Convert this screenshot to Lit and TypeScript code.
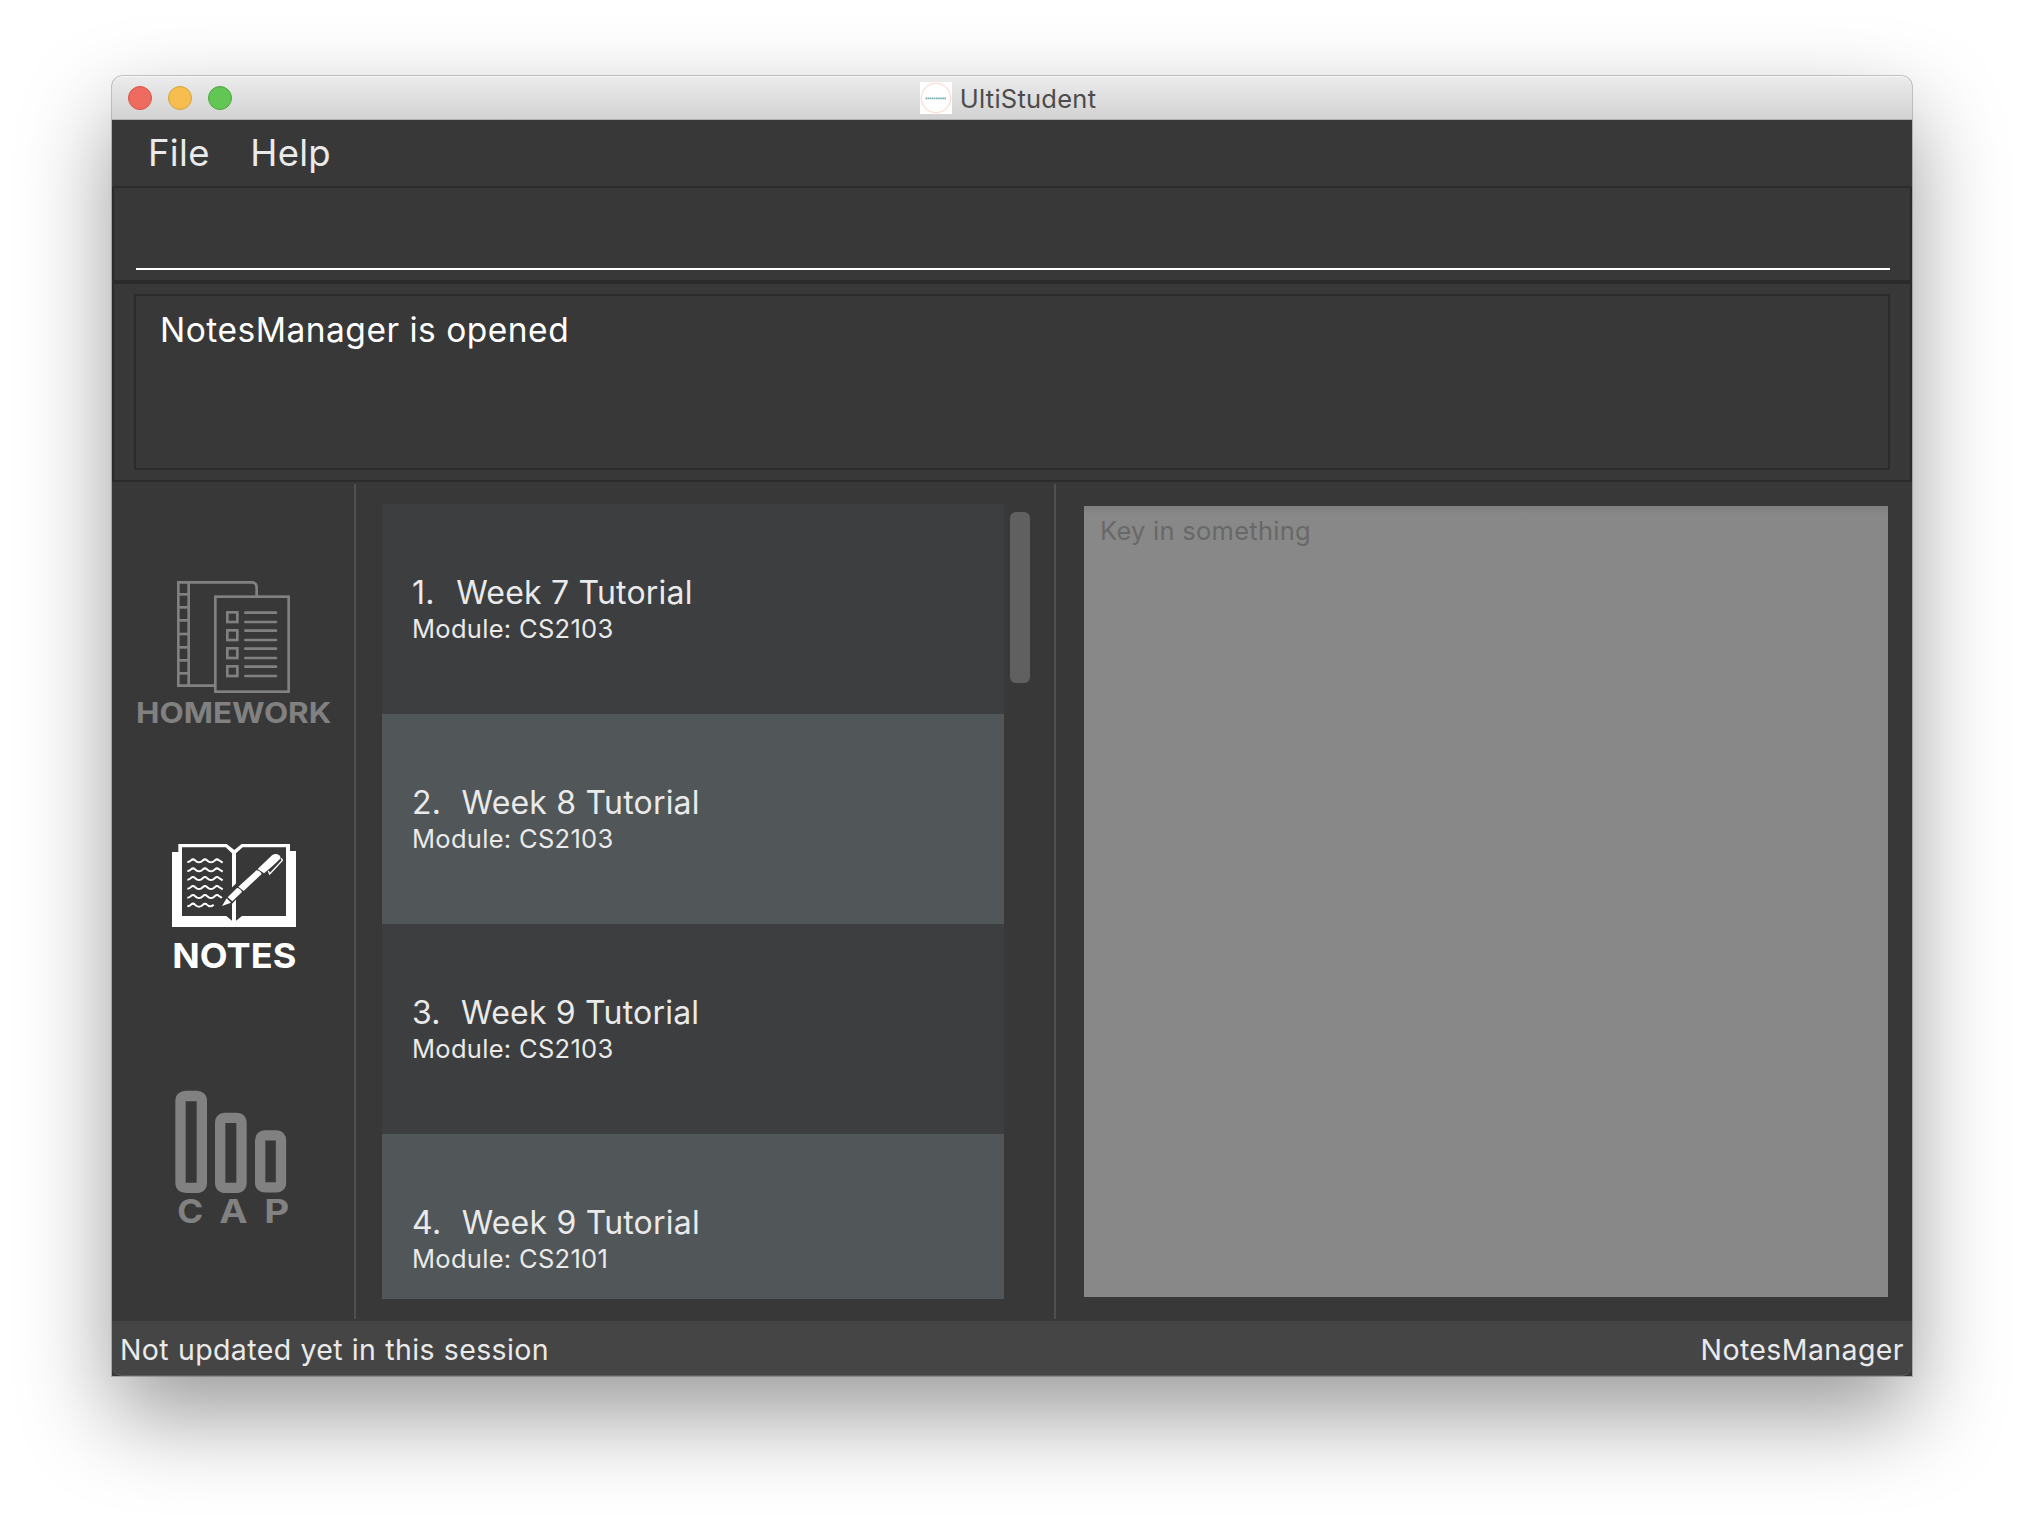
import { LitElement, html, css, svg } from "lit";
import { customElement, property } from "lit/decorators.js";

interface Note {
  title: string;
  module: string;
}

const NOTES: Note[] = [
  { title: "Week 7 Tutorial", module: "CS2103" },
  { title: "Week 8 Tutorial", module: "CS2103" },
  { title: "Week 9 Tutorial", module: "CS2103" },
  { title: "Week 9 Tutorial", module: "CS2101" },
];

const rungs = [103, 142, 181, 222, 262, 301, 340];
const tasks = [153, 207, 261, 315];
const waves = [126, 153, 179, 206, 233];

@customElement("manager-nav")
export class ManagerNav extends LitElement {
  static styles = css`
    :host {
      display: flex;
      flex-direction: column;
      gap: 80px;
      padding: 78px 0 0 8px;
      box-sizing: border-box;
      font-family: Inter, "Liberation Sans", sans-serif;
    }
    svg {
      display: block;
      width: 234px;
    }
    .homework,
    .cap {
      height: 180px;
      color: #818181;
    }
    .notes {
      height: 170px;
      color: #fff;
    }
    text {
      fill: currentColor;
      font-weight: 700;
    }
    .line {
      fill: none;
      stroke: currentColor;
    }
    .solid {
      fill: currentColor;
    }
  `;

  render() {
    return html`
      <svg class="homework" viewBox="0 0 702 540">
        <g class="line" stroke-width="8">
          <path d="M286 377H175V67H398Q410 69 410 84V108" />
          <path d="M206 67V377" />
          ${rungs.map((y) => svg`<path d="M175 ${y}H206" />`)}
          <rect x="286" y="110" width="220" height="285" />
          ${tasks.map(
            (y) => svg`
              <rect x="322" y=${y + 4} width="30" height="29" />
              <path d="M376 ${y + 5}H468M376 ${y + 33}H468" stroke-linecap="round" />`
          )}
        </g>
        <text x="48" y="490" font-size="84" textLength="586" lengthAdjust="spacingAndGlyphs">HOMEWORK</text>
      </svg>

      <svg class="notes" viewBox="0 0 702 510">
        <path
          class="solid"
          fill-rule="evenodd"
          d="M175 72H320L343 90L365 72H510V93H528V321H156V96H175ZM186 82H317L336 100V302L319 288H186ZM498 82H368L348 100V302L366 288H498Z"
        />
        <g class="line" stroke-width="6">
          ${waves.map(
            (y) => svg`<path d="M202 ${y}Q209 ${y} 213 ${y - 5}Q219 ${y - 11} 225 ${y - 5}L230 ${y - 1}Q237 ${y + 3} 244 ${y - 1}L249 ${y - 5}Q255 ${y - 11} 261 ${y - 5}L266 ${y - 1}Q273 ${y + 3} 280 ${y - 1}L285 ${y - 5}Q291 ${y - 11} 297 ${y - 5}L308 ${y + 2}" />`
          )}
          <path d="M202 259Q209 259 213 254Q219 248 225 254L230 258Q237 262 244 258L249 254Q255 248 261 254L266 258Q273 261 281 254" />
        </g>
        <path d="M312 252L350 212L455 112" fill="none" stroke="#383838" stroke-width="34" />
        <path class="solid" d="M306 258L320 235L333 248ZM323 232L351 204Q361 205 366 216L337 244ZM355 200L409 151Q420 152 425 162L371 213ZM413 147L457 105Q468 98 478 106Q484 112 480 120L432 160Z" />
        <path d="M443 160L484 120" stroke="#383838" stroke-width="10" />
        <path class="line" d="M445 153L449 162L487 121L484 115" stroke-width="4" />
        <text x="157" y="443" font-size="102" textLength="372" lengthAdjust="spacingAndGlyphs">NOTES</text>
      </svg>

      <svg class="cap" viewBox="0 0 702 540">
        <g class="line" stroke-width="31">
          <path d="M197.500 78H230Q245.500 78 245.500 93V338Q245.500 353.500 230 353.500H197.500Q181.500 353.500 181.500 338V93Q181.500 78 197.500 78Z" />
          <path d="M316 143.500H349Q364.500 143.500 364.500 159V338Q364.500 353.500 349 353.500H316Q300.500 353.500 300.500 338V159Q300.500 143.500 316 143.500Z" />
          <path d="M436 196H468Q483 196 483 212V338Q483 352 468 352H436Q420.500 352 420.500 338V212Q420.500 196 436 196Z" />
        </g>
        <text x="172" y="460" font-size="99" textLength="78" lengthAdjust="spacingAndGlyphs">C</text>
        <text x="298" y="460" font-size="99" textLength="85" lengthAdjust="spacingAndGlyphs">A</text>
        <text x="433" y="460" font-size="99" textLength="75" lengthAdjust="spacingAndGlyphs">P</text>
      </svg>
    `;
  }
}

@customElement("note-card")
export class NoteCard extends LitElement {
  @property({ type: Number }) index = 1;
  @property() title = "";
  @property() module = "";

  static styles = css`
    :host {
      display: flex;
      flex-direction: column;
      flex: none;
      box-sizing: border-box;
      height: 210px;
      padding: 69px 0 0 30px;
      color: #eaeaea;
      background: #3c3e3f;
    }
    :host(.even) {
      background: #515658;
    }
    .heading {
      display: flex;
      font-size: 32px;
      line-height: 40px;
      gap: 20.200px;
      letter-spacing: 0.2px;
    }
    .number {
      min-width: 24px;
      letter-spacing: 0.3px;
    }
    .module {
      font-size: 25.500px;
      line-height: 32px;
      letter-spacing: 0.3px;
    }
  `;

  render() {
    return html`
      <div class="heading"><span class="number">${this.index}.</span><span>${this.title}</span></div>
      <div class="module">Module: ${this.module}</div>
    `;
  }
}

@customElement("app-root")
export class AppRoot extends LitElement {
  static styles = css`
    :host {
      display: block;
      box-sizing: border-box;
      width: 2024px;
      height: 1524px;
      padding: 76px 112px 148px;
      background: #fff;
      overflow: hidden;
      font-family: Inter, "Liberation Sans", sans-serif;
      color: #eaeaea;
      white-space: nowrap;
    }
    .window {
      display: flex;
      flex-direction: column;
      width: 1800px;
      height: 1300px;
      border-radius: 11px 11px 0 0;
      background: #383838;
      box-shadow: 0 0 0 1px rgba(0, 0, 0, 0.2), 0 39px 92px rgba(0, 0, 0, 0.4);
    }
    .titlebar {
      display: grid;
      grid-template-columns: 1fr auto 1fr;
      align-items: center;
      box-sizing: border-box;
      height: 44px;
      padding: 0 24px 0 16px;
      border-bottom: 1px solid #b0b0b0;
      border-radius: 11px 11px 0 0;
      background: linear-gradient(#ececec, #d2d2d2);
      box-shadow: inset 0 1px #f6f6f6;
    }
    .lights {
      display: flex;
      gap: 16px;
    }
    .light {
      box-sizing: border-box;
      width: 24px;
      height: 24px;
      border-radius: 50%;
    }
    .close { background: #ed6b5f; border: 1px solid #d95448; }
    .minimise { background: #f5be4f; border: 1px solid #d9a13c; }
    .zoom { background: #62c655; border: 1px solid #4ea73c; }
    .caption {
      display: flex;
      align-items: center;
      gap: 8px;
      color: #4c4c4c;
      font-size: 25.500px;
      letter-spacing: 0.25px;
    }
    .name {
      padding-top: 2px;
    }
    .logo {
      width: 32px;
      height: 32px;
    }
    .menu {
      display: flex;
      align-items: center;
      height: 66px;
      padding-left: 36px;
      gap: 40.500px;
      font-size: 36.500px;
      letter-spacing: 0.3px;
    }
    .command {
      box-sizing: border-box;
      height: 96px;
      padding: 0 20px 10px 22px;
      border: 2px solid #2b2b2b;
      display: flex;
    }
    .input {
      flex: 1;
      border-bottom: 2px solid #fff;
    }
    .result {
      box-sizing: border-box;
      height: 200px;
      padding: 10px 20px;
      border: 2px solid #2b2b2b;
      display: flex;
    }
    .message {
      flex: 1;
      box-sizing: border-box;
      border: 2px solid #2b2b2b;
      padding: 13px 24px;
      font-size: 33.500px;
      line-height: 42px;
      letter-spacing: 0.5px;
      color: #fff;
    }
    .body {
      display: flex;
      height: 839px;
    }
    manager-nav {
      width: 242px;
    }
    .divider {
      width: 2px;
      margin: 2px 0;
      background: #4f4f4f;
    }
    .list {
      display: flex;
      flex-direction: column;
      width: 622px;
      height: 795px;
      margin: 22px 6px 0 26px;
      overflow: hidden;
    }
    .thumb {
      width: 20px;
      height: 171px;
      margin: 30px 24px 0 0;
      border-radius: 6px;
      background: #606060;
    }
    .editor {
      box-sizing: border-box;
      width: 804px;
      height: 791px;
      margin: 24px 0 0 28px;
      padding: 9px 16px;
      color: #686868;
      background: linear-gradient(#7f7f7f, #888 8px);
      font-size: 25.500px;
      line-height: 32px;
      letter-spacing: 0.27px;
    }
    .status {
      display: flex;
      justify-content: space-between;
      align-items: center;
      box-sizing: border-box;
      height: 55px;
      padding: 2px 8px 0 8px;
      border-bottom: 1px solid #5d5d5d;
      border-radius: 0 0 10px 10px;
      background: #454545;
      font-size: 28.500px;
      letter-spacing: 0.4px;
      word-spacing: 0.400px;
    }
  `;

  render() {
    return html`
      <div class="window">
        <div class="titlebar">
          <div class="lights">
            <span class="light close"></span>
            <span class="light minimise"></span>
            <span class="light zoom"></span>
          </div>
          <div class="caption">
            <svg class="logo" viewBox="0 0 32 32">
              <rect width="32" height="32" fill="#fff" />
              <circle cx="16" cy="16" r="14.700" fill="none" stroke="#f8dfd6" stroke-width="1.300" />
              <path d="M5.500 16.300H26.500" stroke="#77aaa8" stroke-width="1.800" stroke-dasharray="1.600 .5" />
            </svg>
            <span class="name">UltiStudent</span>
          </div>
          <span></span>
        </div>
        <div class="menu"><span>File</span><span>Help</span></div>
        <div class="command"><div class="input"></div></div>
        <div class="result"><div class="message">NotesManager is opened</div></div>
        <div class="body">
          <manager-nav></manager-nav>
          <div class="divider"></div>
          <div class="list">
            ${NOTES.map(
              (note, i) => html`<note-card
                class=${i % 2 ? "even" : "odd"}
                .index=${i + 1}
                .title=${note.title}
                .module=${note.module}
              ></note-card>`
            )}
          </div>
          <div class="thumb"></div>
          <div class="divider"></div>
          <div class="editor">Key in something</div>
        </div>
        <div class="status"><span>Not updated yet in this session</span><span>NotesManager</span></div>
      </div>
    `;
  }
}
